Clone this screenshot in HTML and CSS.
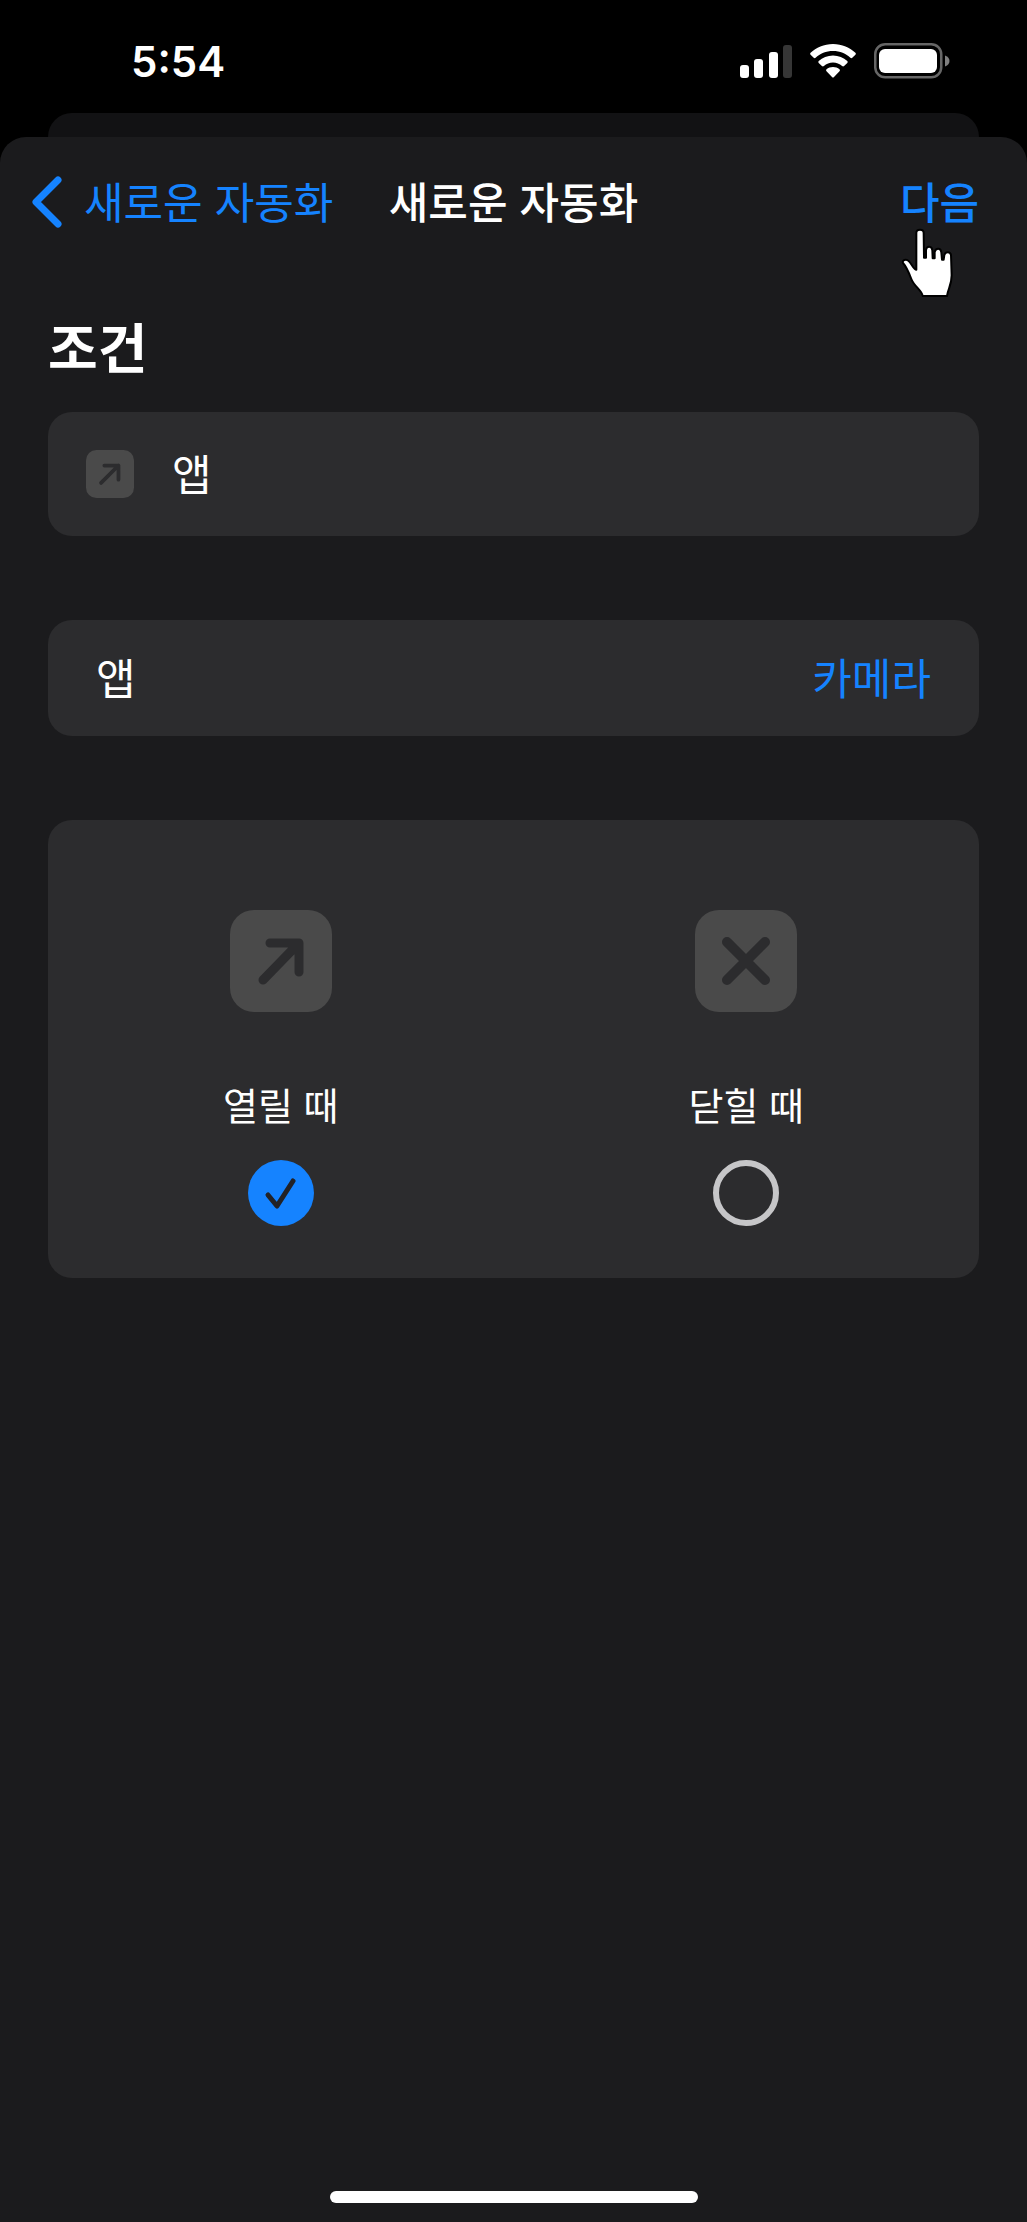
FILE: index.html
```html
<!DOCTYPE html>
<html lang="ko">
  <head>
    <title>새로운 자동화</title>
    <meta charset="utf-8" />
    <meta name="viewport" content="width=device-width, initial-scale=1" />
    <link rel="stylesheet" href="styles.css">
  </head>
  <body>
    <header class="status-bar">
      <time class="clock">5:54</time>
      <div class="status-icons">
        <svg width="52" height="34" viewBox="0 0 52 34" fill="#fff" aria-hidden="true">
          <rect x="0" y="21" width="9" height="13" rx="3" />
          <rect x="14" y="15" width="9" height="19" rx="3" />
          <rect x="29" y="8" width="9" height="26" rx="3" />
          <rect x="43" y="1" width="9" height="33" rx="3" fill="#363636" />
        </svg>
        <svg width="46" height="34" viewBox="0 0 46 34" fill="#fff" aria-hidden="true">
          <path d="M23 0C14 0 6 3.500 .6 8.800Q-.3 9.800 .6 10.700L3.700 13.800Q4.600 14.600 5.600 13.700C10 9.600 16 7 23 7S36 9.600 40.400 13.700Q41.400 14.600 42.300 13.800L45.400 10.700Q46.300 9.800 45.400 8.800C40 3.500 32 0 23 0Z" />
          <path d="M23 11.500C17.500 11.500 12.500 13.600 8.700 17Q7.800 18 8.700 19L11.900 22Q12.900 22.900 13.900 22C16.400 19.900 19.500 18.500 23 18.500S29.600 19.900 32.100 22Q33.100 22.900 34.100 22L37.300 19Q38.200 18 37.300 17C33.500 13.600 28.500 11.500 23 11.500Z" />
          <path d="M23 23C20.500 23 18.300 23.900 16.500 25.300Q15.500 26.200 16.500 27.200L22 33Q23 34 24 33L29.500 27.200Q30.500 26.200 29.500 25.300C27.700 23.900 25.500 23 23 23Z" />
        </svg>
        <svg width="76" height="36" viewBox="0 0 76 36" aria-hidden="true">
          <rect x="1.250" y="1.250" width="66" height="33" rx="10" fill="none" stroke="#666" stroke-width="2.500" />
          <rect x="5" y="6" width="58" height="24" rx="6" fill="#fff" />
          <path d="M71 12.500C77 14.500 77 21.500 71 23.500Z" fill="#808080" />
        </svg>
      </div>
    </header>

    <div class="sheet-behind"></div>

    <main class="sheet">
      <nav class="nav">
        <a href="#" class="back">
          <svg width="30" height="52" viewBox="0 0 30 52" fill="none" stroke="currentColor" stroke-width="7" stroke-linecap="round" stroke-linejoin="round" aria-hidden="true">
            <path d="M26 4 4 26 26 48" />
          </svg>
          <span>새로운 자동화</span>
        </a>
        <h1>새로운 자동화</h1>
        <button type="button" class="next">다음</button>
        <!-- tap hint -->
        <svg class="pointer" width="54" height="72" viewBox="60 200 162 216" aria-hidden="true">
          <path d="M109 328V218C109 205 131 205 131 218L132 292H138V268C141 255 156 257 157 270L158 294H164V275C167 261 183 262 184 276L186 298H191L193 284C196 273 211 273 213 284L215 345C215 375 204 385 201 407H128C126 390 102 378 94 356C86 335 80 320 69 308C65 300 78 294 87 303C96 312 101 328 109 328Z" fill="#fff" stroke="#000" stroke-width="6" stroke-linejoin="round" />
        </svg>
      </nav>

      <section class="content">
        <h2>조건</h2>

        <div class="card trigger">
          <svg width="48" height="48" viewBox="0 0 102 102" aria-hidden="true">
            <rect width="102" height="102" rx="22" fill="#4a4a4a" />
            <path d="M39 33H69V63M69 33 32 70" fill="none" stroke="#2c2c2e" stroke-width="8" stroke-linecap="round" stroke-linejoin="round" />
          </svg>
          <span>앱</span>
        </div>

        <div class="card row">
          <span id="app-label">앱</span>
          <button type="button" aria-describedby="app-label">카메라</button>
        </div>

        <div class="card options">
          <label class="option">
            <svg width="102" height="102" viewBox="0 0 102 102" aria-hidden="true">
              <rect width="102" height="102" rx="24" fill="#4a4a4a" />
              <path d="M40 33H69V62M69 33 33 70" fill="none" stroke="#2c2c2e" stroke-width="9" stroke-linecap="round" stroke-linejoin="round" />
            </svg>
            <span class="option-name">열릴 때</span>
            <span class="radio">
              <input type="radio" name="when" value="open" checked />
              <svg class="check" width="66" height="66" viewBox="0 0 66 66" fill="none" stroke="#222226" stroke-width="5" stroke-linecap="round" stroke-linejoin="round" aria-hidden="true">
                <path d="M20 35 29 46 45 21" />
              </svg>
            </span>
          </label>
          <label class="option">
            <svg width="102" height="102" viewBox="0 0 102 102" aria-hidden="true">
              <rect width="102" height="102" rx="24" fill="#4a4a4a" />
              <path d="M32 32 70 70M70 32 32 70" fill="none" stroke="#2c2c2e" stroke-width="10" stroke-linecap="round" />
            </svg>
            <span class="option-name">닫힐 때</span>
            <span class="radio">
              <input type="radio" name="when" value="close" />
              <svg class="check" width="66" height="66" viewBox="0 0 66 66" fill="none" stroke="#222226" stroke-width="5" stroke-linecap="round" stroke-linejoin="round" aria-hidden="true">
                <path d="M20 35 29 46 45 21" />
              </svg>
            </span>
          </label>
        </div>
      </section>

      <div class="home-indicator"></div>
    </main>
  </body>
</html>
```

FILE: styles.css
```css
* {
  box-sizing: border-box;
}
body {
  display: flex;
  flex-direction: column;
  min-height: 100vh;
  margin: 0;
  background: #000;
  color: #fff;
  font-family: "Noto Sans CJK KR", sans-serif;
  font-size: 43px;
  line-height: 60px;
}
svg {
  display: block;
  flex-shrink: 0;
}
button {
  padding: 0;
  border: none;
  background: none;
  color: #1583ff;
  font: inherit;
  cursor: pointer;
}
h1,
h2 {
  margin: 0;
}

/* status bar */
.status-bar {
  display: flex;
  align-items: center;
  justify-content: space-between;
  height: 113px;
  padding: 8px 77px 0 131px;
}
.clock {
  padding-top: 2px;
  font-family: Inter, sans-serif;
  font-size: 42px;
  font-weight: 600;
}
.status-icons {
  display: flex;
  align-items: center;
  gap: 18px;
}

/* sheets */
.sheet-behind {
  height: 24px;
  margin: 0 48px;
  border-radius: 24px 24px 0 0;
  background: #121214;
}
.sheet {
  display: flex;
  flex: 1;
  flex-direction: column;
  border-radius: 26px 26px 0 0;
  background: #1b1b1d;
}

.nav {
  position: relative;
  display: grid;
  grid-template-columns: 1fr auto 1fr;
  align-items: center;
  height: 130px;
  padding: 0 48px 0 32px;
}
.back {
  display: flex;
  align-items: center;
  gap: 22px;
  color: #1583ff;
  text-decoration: none;
}
/* the CJK face sits low in its line box */
.back span,
.nav h1,
.next,
.trigger span {
  padding-bottom: 4px;
}
.nav h1 {
  padding-right: 16px;
  margin-left: 32px;
  font-size: 43px;
  font-weight: 500;
}
.next {
  justify-self: end;
  font-weight: 500;
}
.pointer {
  position: absolute;
  top: 90px;
  right: 73px;
}

.content {
  padding: 47px 48px 0;
}
.content h2 {
  margin-bottom: 34px;
  font-size: 54px;
  font-weight: 700;
  line-height: 64px;
}
.card {
  margin-bottom: 84px;
  border-radius: 24px;
  background: #2c2c2e;
}
.trigger {
  display: flex;
  align-items: center;
  gap: 38px;
  padding: 30px 38px;
}
.row {
  display: flex;
  align-items: center;
  justify-content: space-between;
  padding: 26px 48px 30px;
}

.options {
  display: grid;
  grid-template-columns: 1fr 1fr;
  padding: 90px 0 52px;
}
.option {
  display: flex;
  flex-direction: column;
  align-items: center;
}
.option-name {
  margin: 64px 0 28px;
  font-size: 38px;
  line-height: 56px;
}
.radio {
  display: grid;
}
.radio input,
.check {
  grid-area: 1 / 1;
}
.radio input {
  width: 66px;
  height: 66px;
  margin: 0;
  border: 6px solid #c6c6c8;
  border-radius: 50%;
  appearance: none;
}
.radio input:checked {
  border: none;
  background: #1583ff;
}
.check {
  visibility: hidden;
  pointer-events: none;
}
.radio input:checked + .check {
  visibility: visible;
  z-index: 1;
}

.home-indicator {
  width: 368px;
  height: 12px;
  margin: auto auto 19px;
  border-radius: 6px;
  background: #fff;
}
```
